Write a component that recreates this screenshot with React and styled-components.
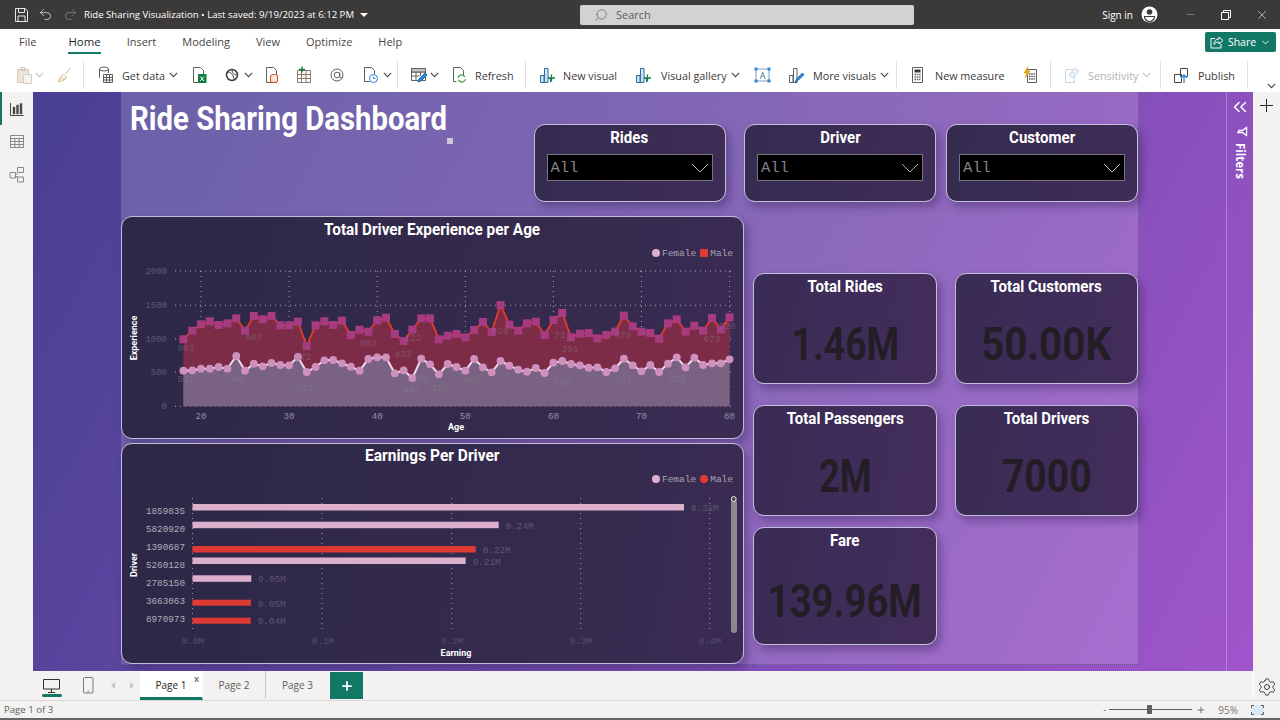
import React from 'react'
import styled, { createGlobalStyle } from 'styled-components'
import { Undo2, Redo2, Search, Minus, X, ChevronDown, Plus, Settings, ChevronsLeft } from 'lucide-react'

const UI = '"Open Sans", "Noto Sans", sans-serif'
const DIN = 'Roboto, sans-serif'
const MONO = '"Liberation Mono", monospace'

const Global = createGlobalStyle`
  html, body { margin: 0; padding: 0; background: #f3f2f1; overflow: hidden; }
  * { box-sizing: border-box; }
`

const Window = styled.div`
  width: 1280px;
  height: 720px;
  display: flex;
  flex-direction: column;
  font-family: ${UI};
  color: #323130;
  overflow: hidden;
`
/* the report font is narrower than Roboto, so squeeze it */
const Din = styled.span`
  display: inline-block;
  white-space: nowrap;
  transform: scaleX(${p => p.$x || 0.94});
`

/* title bar */
const TitleBar = styled.div`
  height: 29px;
  flex: none;
  background: #3b3a39;
  display: flex;
  align-items: center;
  color: #fff;
  font-size: 9.6px;
`
const TitleIcons = styled.div`
  width: 84px;
  padding-left: 15px;
  display: flex;
  align-items: center;
  gap: 10px;
`
const DocTitle = styled.div`
  width: 496px;
  display: flex;
  align-items: center;
  gap: 6px;
  white-space: nowrap;
`
const Caret = styled.span`
  width: 0;
  height: 0;
  border-left: 4px solid transparent;
  border-right: 4px solid transparent;
  border-top: 4px solid #fff;
`
const SearchBox = styled.div`
  width: 334px;
  height: 20px;
  background: #d2d2d2;
  border-radius: 2px;
  padding-left: 14px;
  display: flex;
  align-items: center;
  gap: 8px;
  color: #605e5c;
  font-size: 11px;
`
const SearchIcon = styled(Search)`
  transform: scaleX(-1);
`
const Account = styled.div`
  margin-left: auto;
  display: flex;
  align-items: center;
  color: #fff;
`
const SignIn = styled.span`
  font-size: 10px;
  margin-right: 8px;
`
const WinBtn = styled.div`
  width: 36px;
  margin-left: ${p => p.$ml || 0}px;
  display: flex;
  justify-content: center;
  align-items: center;
`

/* menu tabs */
const MenuBar = styled.div`
  height: 30px;
  flex: none;
  background: #fff;
  display: flex;
  align-items: stretch;
  padding-left: 19px;
  gap: 26px;
  position: relative;
`
const Menu = styled.div`
  display: flex;
  align-items: center;
  font-size: ${p => (p.$active ? 11.4 : 11)}px;
  height: 24px;
  margin-top: 1px;
  margin-left: ${p => p.$ml || 0}px;
  color: ${p => (p.$active ? '#201f1e' : '#484644')};
  border-bottom: 2px solid ${p => (p.$active ? '#117865' : 'transparent')};
`
const ShareBtn = styled.div`
  position: absolute;
  left: 1205px;
  top: 3px;
  width: 71px;
  height: 20px;
  border-radius: 2px;
  background: #117865;
  color: #fff;
  font-size: 10.5px;
  display: flex;
  align-items: center;
  justify-content: center;
  gap: 4px;
`

/* ribbon */
const Ribbon = styled.div`
  height: 33px;
  flex: none;
  background: #fff;
  display: flex;
  align-items: center;
  padding-left: 16px;
  padding-bottom: 1px;
  font-size: 10.8px;
  color: #3b3a39;
`
const Btn = styled.div`
  width: ${p => p.$w}px;
  padding-left: ${p => p.$pl || 0}px;
  display: flex;
  align-items: center;
  flex: none;
  white-space: nowrap;
  color: ${p => (p.$off ? '#b5b3b1' : 'inherit')};
`
const Label = styled.span`
  margin-left: ${p => p.$ml || 8}px;
  margin-right: 4px;
`
const Gap = styled.span`
  width: ${p => p.$w}px;
`
const Sep = styled.div`
  width: 1px;
  height: 28px;
  flex: none;
  background: #e1dfdd;
`
const CollapseBtn = styled.div`
  margin-left: auto;
  margin-top: 21px;
  margin-right: 4px;
  display: flex;
`

/* body */
const Body = styled.div`
  height: 579px;
  flex: none;
  display: flex;
`
const Rail = styled.div`
  width: ${p => p.$w}px;
  flex: none;
  background: #f3f2f1;
  display: flex;
  flex-direction: column;
  align-items: center;
`
const RailBtn = styled.div`
  width: 100%;
  height: 33px;
  display: flex;
  align-items: center;
  justify-content: center;
  border-left: 2px solid ${p => (p.$active ? '#117865' : 'transparent')};
  padding-right: 2px;
`
const AddPane = styled(Plus)`
  margin-top: 3px;
`
const Workspace = styled.div`
  flex: 1;
  display: flex;
  padding-left: 88px;
  background: linear-gradient(118deg, #483f94 0%, #6a4aa8 45%, #a055cb 100%);
`
const Page = styled.div`
  width: 1018px;
  height: 573px;
  position: relative;
  background: linear-gradient(118deg, rgba(255,255,255,.17), rgba(255,255,255,.15));
  border-right: 1px dotted #5a4a80;
  border-bottom: 1px dotted #5a4a80;
`
const Header = styled.div`
  height: 124px;
  display: flex;
  align-items: flex-start;
`
const ReportTitle = styled.div`
  font-family: ${DIN};
  font-weight: 700;
  font-size: 33px;
  line-height: 38px;
  margin: 8px 0 0 9px;
  color: #fff;
  white-space: nowrap;
  transform: scaleX(.888);
  transform-origin: left center;
`
const TitleHandle = styled.span`
  position: absolute;
  left: 326px;
  top: 46px;
  width: 6px;
  height: 6px;
  background: #cbc7dc;
`
const Slicers = styled.div`
  margin: 32px 0 0 auto;
  display: flex;
`
const Panel = styled.div`
  border: 1px solid #c4bcd8;
  border-radius: 11px;
  background: linear-gradient(100deg, ${p => p.$from || '#392c55'}, ${p => p.$to || '#432d5b'});
  box-shadow: 4px 5px 9px rgba(45, 25, 80, .38);
`
const Slicer = styled(Panel)`
  width: 192px;
  height: 78px;
  margin-left: ${p => p.$ml || 0}px;
  padding: 0 12px;
  display: flex;
  flex-direction: column;
`
const PanelTitle = styled.div`
  font-family: ${DIN};
  font-weight: 700;
  font-size: 16px;
  line-height: ${p => p.$h || 26}px;
  height: ${p => p.$h || 26}px;
  text-align: center;
  color: #fff;
  flex: none;
`
const Dropdown = styled.div`
  height: 27px;
  margin-top: 3px;
  background: #000;
  border: 1px solid #77747f;
  display: flex;
  align-items: center;
  justify-content: space-between;
  padding: 0 3px;
  font-family: ${MONO};
  font-size: 15.5px;
  color: #85828c;
`
const Main = styled.div`
  display: flex;
  gap: 9px;
`
const Charts = styled.div`
  width: 623px;
  display: flex;
  flex-direction: column;
  gap: 4px;
`
const ChartCard = styled(Panel)`
  height: ${p => p.$h}px;
  display: flex;
  flex-direction: column;
`
const Legend = styled.div`
  height: 14px;
  margin-top: 4px;
  padding-right: 10px;
  display: flex;
  justify-content: flex-end;
  align-items: center;
  font-family: ${MONO};
  font-size: 9.5px;
  color: #a7a3b4;
`
const Swatch = styled.span`
  width: 8px;
  height: 8px;
  margin: 0 2px 0 4px;
  background: ${p => p.$color};
  border-radius: ${p => (p.$round ? '50%' : '0')};
`
const ChartSvg = styled.svg`
  display: block;
  flex: none;
`
const Kpis = styled.div`
  padding-top: 57px;
  display: grid;
  grid-template-columns: 184px 183px;
  grid-template-rows: 111px 111px 108px;
  column-gap: 18px;
  row-gap: 21px;
`
const Kpi = styled(Panel)`
  display: flex;
  flex-direction: column;
  margin-top: ${p => p.$mt || 0}px;
  text-align: center;
`
const KpiValue = styled.div`
  flex: 1;
  display: flex;
  align-items: center;
  justify-content: center;
  font-family: ${DIN};
  font-weight: 700;
  font-size: 46px;
  color: #231e26;
  padding-top: 4px;
`
const FilterPane = styled.div`
  margin-left: auto;
  width: 27px;
  border-left: 1px solid rgba(255,255,255,.28);
  display: flex;
  flex-direction: column;
  align-items: center;
  padding-top: 4px;
  color: #fff;
`
const FunnelWrap = styled.div`
  margin: 8px 0 0 4px;
  display: flex;
  transform: rotate(90deg);
`
const FiltersText = styled.div`
  writing-mode: vertical-rl;
  font-size: 11.5px;
  font-weight: 700;
  margin-top: 6px;
`

/* page tabs */
const PageBar = styled.div`
  height: 29px;
  flex: none;
  background: #f3f2f1;
  display: flex;
  position: relative;
`
const ViewBtn = styled.div`
  width: ${p => p.$w}px;
  padding-left: ${p => p.$pl || 0}px;
  display: flex;
  align-items: center;
  flex: none;
`
const DesktopView = styled(ViewBtn)`
  position: relative;
  &::after {
    content: '';
    position: absolute;
    left: 42px;
    top: 23px;
    width: 20px;
    height: 3px;
    border-radius: 2px;
    background: #117865;
  }
`
const PageNav = styled.svg`
  margin-left: 17px;
`
const PageTab = styled.div`
  width: ${p => p.$w || 63}px;
  height: 29px;
  flex: none;
  display: flex;
  align-items: center;
  justify-content: center;
  padding-top: 2px;
  position: relative;
  font-size: 10px;
  background: ${p => (p.$active ? '#fff' : 'transparent')};
  color: ${p => (p.$active ? '#252423' : '#605e5c')};
  border-right: 1px solid ${p => (p.$active ? '#fff' : p.$last ? 'transparent' : '#c8c6c4')};
  border-bottom: 3px solid ${p => (p.$active ? '#117865' : 'transparent')};
`
const TabClose = styled.span`
  position: absolute;
  right: 3px;
  top: 1px;
  font-size: 9.5px;
  color: #323130;
`
const AddTab = styled.div`
  width: 33px;
  height: 27px;
  margin-top: 1px;
  background: #117865;
  display: flex;
  align-items: center;
  justify-content: center;
`
const SettingsBtn = styled.div`
  margin-left: auto;
  width: 27px;
  display: flex;
  align-items: center;
  justify-content: center;
  padding-top: 2px;
  border-left: 1px solid #fff;
`

/* status bar */
const StatusBar = styled.div`
  height: 20px;
  flex: none;
  background: #f3f2f1;
  border-top: 1px solid #dcdad8;
  border-bottom: 2px solid #666;
  padding-left: 4px;
  display: flex;
  align-items: center;
  font-size: 9.6px;
  color: #605e5c;
`
const Zoom = styled.div`
  margin-left: auto;
  display: flex;
  align-items: center;
  color: #605e5c;
`
const ZoomTrack = styled.div`
  width: 83px;
  height: 1px;
  margin: 0 4px 0 3px;
  background: #605e5c;
  position: relative;
`
const ZoomThumb = styled.span`
  position: absolute;
  left: 38px;
  top: -4px;
  width: 5px;
  height: 9px;
  border-radius: 1px;
  background: #605e5c;
`
const ZoomPct = styled.span`
  margin-left: 12px;
  font-size: 10px;
  color: #797775;
`
const FitBtn = styled.div`
  margin: 0 16px 0 13px;
  width: 13px;
  height: 10px;
  display: flex;
  background: #dbe9f4;
`

/* icons */
const Ic = ({ w = 16, h = 18, stroke = '#605e5c', children }) => (
  <svg width={w} height={h} viewBox={`0 0 ${w} ${h}`} fill="none" stroke={stroke} strokeWidth="1">{children}</svg>
)
const Chev = ({ off }) => (
  <svg width="9" height="6" viewBox="0 0 9 6" fill="none" stroke={off ? '#c8c6c4' : '#484644'} strokeWidth="1.1">
    <path d="M.8.8 4.5 4.6 8.2.8" />
  </svg>
)
const IcoSave = () => <Ic w={13} h={14} stroke="#e8e6e4"><path d="M.5.5h9.7l2.3 2.3v10.7H.5z" /><path d="M3.5.5v4h6v-4M3 13.5V8h7v5.500" /></Ic>
const IcoPaste = () => <Ic><path d="M1.500 3.500h11v13h-11z" fill="#eee4d2" stroke="#d4c8b4" /><path d="M5 1.500h4v3h-4z" stroke="#cdc3b2" /><path d="M7.500 8.500h8v9h-8z" fill="#f4f3f2" stroke="#d2d0ce" /></Ic>
const IcoBrush = () => <Ic w={15}><path d="M13.500 2 8.500 8M1.500 15.500c.5-3 2.500-6 5-7l3 3c-1 2-4 4-8 4zM3.500 14l2-3M6 14l1.500-2" stroke="#d8b67a" /><path d="M6.500 8.500l3 3" stroke="#b9b7b5" /></Ic>
const IcoData = () => <Ic><ellipse cx="6" cy="3" rx="4.500" ry="2" /><path d="M1.500 3v9M10.500 3v4" /><path d="M5.500 8.500h9v8h-9zM5.500 11.500h9M5.500 14h9M8.500 8.500v8M11.500 8.500v8" fill="#f8f8f8" /></Ic>
const IcoExcel = () => <Ic w={15}><path d="M1.500 1.500h7l3 3v12h-10z" /><rect x="6" y="8" width="8.500" height="9" fill="#107c41" stroke="none" /><path d="m8.300 10.500 3.600 4.500m0-4.500L8.300 15" stroke="#fff" /></Ic>
const IcoDataverse = () => <Ic><circle cx="8" cy="9" r="5.500" stroke="#3b3a39" strokeWidth="1.500" /><path d="M3 6c4 0 6 2 7 7M8 4c0 3 2 5 6 5" stroke="#3b3a39" /></Ic>
const IcoSql = () => <Ic><path d="M2.500 1.500h7l3 3v12h-10z" /><ellipse cx="10" cy="10" rx="3.500" ry="1.500" stroke="#ca5010" fill="#fff" /><path d="M6.500 10v5.500c1 1.300 6 1.300 7 0V10" stroke="#ca5010" fill="#fbe6d6" /></Ic>
const IcoTable = () => <Ic><path d="M1.500 4.500h13v12h-13zM1.500 8.500h13M1.500 12.500h13M5.500 4.500v12M10 4.500v12" stroke="#8a7868" /><path d="M6 .5v6M3 3.500h6" stroke="#107c41" strokeWidth="1.300" /></Ic>
const IcoAt = () => <Ic><circle cx="8" cy="9" r="6" /><circle cx="8" cy="9" r="2.800" /><path d="M10.800 6.500v4c0 2 2.500 1.500 3-.5" /></Ic>
const IcoClock = () => <Ic><path d="M1.500 1.500h7l3 3v4M1.500 1.500v14h5" /><circle cx="10.500" cy="12.500" r="4" stroke="#2b7cd3" fill="#fff" /><path d="M10.500 10.500v2h2" stroke="#2b7cd3" /></Ic>
const IcoEdit = () => <Ic w={17}><path d="M1.500 2.500h14v12h-14zM1.500 6h14M1.500 10h8M6 6v8.500M10.500 6v4" /><path d="M1.500 2.500h14V6h-14z" fill="#c8c6c4" /><path d="m8 16 1-3 6-6 2 2-6 6z" fill="#2b88d8" stroke="#1a6fb5" /></Ic>
const IcoRefresh = () => <Ic><path d="M2.500 1.500h7l3 3v5M2.500 1.500v14h3" /><path d="M7 12a3.500 3.500 0 0 1 6-2l1.200 1M14.500 13a3.500 3.500 0 0 1-6 2L7.300 14" stroke="#3aa655" strokeWidth="1.200" /></Ic>
const IcoVisual = () => <Ic><path d="M1.500 9.500h3.500v7H1.500zM5.500 2.500H9v14H5.500z" stroke="#2b6ea3" fill="#cfe3f3" /><path d="M9 12.500h2.500v4" stroke="#2b6ea3" /><path d="M12.500 8.500v7M9 12h7" stroke="#107c41" strokeWidth="1.300" /></Ic>
const IcoA = () => (
  <Ic w={17} h={16} stroke="#2b6ea3">
    <path d="M2 2h13v12H2z" stroke="#7a9cbc" />
    <path d="M.5.5h3v3h-3zM13.500.5h3v3h-3zM.5 12.500h3v3h-3zM13.500 12.500h3v3h-3z" fill="#2b88d8" stroke="none" />
    <text x="8.500" y="11.500" fontSize="9" textAnchor="middle" fill="#2b6ea3" stroke="none" fontFamily={UI}>A</text>
  </Ic>
)
const IcoMore = () => <Ic><path d="M1.500 9.500h3.500v7H1.500zM5.500 2.500H9v14H5.500z" /><path d="m7 17 1.500-4 6-6 1.500 1.500-6 6z" fill="#2b88d8" stroke="#1a6fb5" /></Ic>
const IcoCalc = () => <Ic w={13}><path d="M1.500 1.500h10v15h-10z" /><path d="M3.500 3.500h6v3h-6z" fill="#3b3a39" stroke="none" /><path d="M3.500 8.500h6M3.500 11h6M3.500 13.500h6" strokeWidth="1.300" strokeDasharray="1.500 .8" /></Ic>
const IcoQuick = () => <Ic><path d="M5.500 3.500h9v13h-9z" /><path d="M7 8h6M7 10.500h6M7 13h6" strokeWidth="1.300" strokeDasharray="1.500 .8" /><path d="M6 .5 2 7h3l-2 5 5-7H5z" fill="#f2a900" stroke="#d48c00" strokeWidth=".5" /></Ic>
const IcoSens = () => <Ic stroke="#c5d9ea"><path d="M1.500 3.500h9v13h-9z" /><path d="m5 9 6-7 4 3-6 7z" fill="#eef4f9" /><path d="M8 6l3 2" /></Ic>
const IcoPublish = () => <Ic><path d="M1.500 8.500h7v8h-7zM7.500 2.500h7v8h-7z" stroke="#484644" /><path d="M11 17v-8M8 12l3-3 3 3" stroke="#2b88d8" strokeWidth="1.300" /></Ic>
const IcoReport = () => <Ic w={14} h={14} stroke="#484644"><path d="M.5 1v12.500h13" /><path d="M3 5h2v7H3zM6.500 3h2v9h-2zM10 1.500h2V12h-2z" fill="#484644" strokeWidth=".4" /></Ic>
const IcoGrid = () => <Ic w={14} h={13} stroke="#8a8886"><path d="M.5.5h13v12H.5zM.5 3.500h13M.5 6.500h13M.5 9.500h13M4.800 3.500v9M9.200 3.500v9" /></Ic>
const IcoModel = () => <Ic w={16} h={16} stroke="#8a8886"><path d="M8.500.5h6v5h-6zM8.500 10h6v5h-6zM1 5.500h5.500v5.500H1zM6.500 7h2M6.500 9.500h2" /></Ic>
const IcoAvatar = () => <svg width="17" height="17" viewBox="0 0 17 17"><circle cx="8.500" cy="8.500" r="8" fill="#fff" /><circle cx="8.500" cy="6" r="2.800" fill="#3b3a39" /><path d="M3.500 10.500h10a5 5 0 0 1-10 0z" fill="none" stroke="#3b3a39" strokeWidth="1.200" /></svg>
const IcoRestore = () => <Ic w={10} h={10} stroke="#fff"><path d="M.5 2.500h7v7h-7zM2.500 2.500v-2h7v7h-2" /></Ic>
const IcoShare = () => <Ic w={14} h={13} stroke="#fff"><path d="M5 2.500H1v9.500h10V8" /><path d="M13 4.500 9 1v2C6 3 4 5 4 8.500 5.500 6.500 7 6 9 6v2z" /></Ic>
const IcoFunnel = () => <Ic w={10} h={11} stroke="#fff"><path d="M.8.8h8.400L6 5v4.500L4 8.500V5z" strokeWidth="1.400" /></Ic>
const IcoMonitor = () => <Ic w={18} h={14} stroke="#323130"><path d="M.5.5h16v9.500H.5zM8.500 10v3M5 13.500h7" /></Ic>
const IcoPhone = () => <Ic w={11} h={17} stroke="#797775"><rect x=".5" y=".5" width="9.500" height="15.500" rx="1" /><path d="M4.500 14h1.500" /></Ic>
const IcoFit = () => <Ic w={13} h={10} stroke="#605e5c"><path d="M.5 3V.5H3M10 .5h2.500V3M12.500 7v2.500H10M3 9.500H.5V7" /></Ic>

/* chart data, read off the picture as y px (chart one) per age 18..80 */
const maleY = [373,347,328,319,330,325,310,347,303,313,303,331,331,320,393,331,319,330,317,360,344,350,316,308,357,378,344,310,310,373,362,357,367,345,321,351,270,329,347,325,320,360,315,294,367,356,354,370,360,350,302,334,350,354,371,325,313,350,332,347,309,343,307]
const femaleY = [467,466,461,461,456,461,423,467,446,454,444,450,451,426,471,456,436,435,445,455,467,432,427,427,475,466,489,431,448,478,447,456,467,432,457,472,438,452,464,470,459,474,443,438,447,451,458,457,471,460,431,451,469,450,471,446,427,457,428,450,445,445,433]
const ageX = age => 201 + (age - 20) * 8.81
const pts = arr => arr.map((z, i) => [ageX(18 + i), 215 + z / 3])
const line = p => p.map(([x, y]) => `${x.toFixed(1)},${y.toFixed(1)}`).join(' ')
const area = p => `${p[0][0]},406.3 ${line(p)} ${p[p.length - 1][0]},406.3`

const malePts = pts(maleY)
const femalePts = pts(femaleY)

const dataLabels = [
  ['962', 186, 351], ['517', 186, 382], ['907', 254, 340], ['46', 238, 382], ['903', 368, 346], ['372', 303, 360],
  ['101', 305, 391], ['433', 403, 357], ['122', 413, 341], ['427', 420, 382], ['401', 412, 393], ['125', 440, 391],
  ['828', 500, 334], ['605', 473, 383], ['391', 570, 352], ['71', 560, 338], ['563', 562, 385], ['670', 623, 338],
  ['701', 623, 383], ['723', 677, 382], ['679', 712, 342], ['720', 727, 329],
]

const ExperienceChart = () => (
  <ChartSvg width="621" height="178" viewBox="122 260 621 178">
    <g stroke="#d0cce0" strokeWidth="1" strokeDasharray="1 4" opacity=".75">
      {[271, 305.3, 339, 372.3, 406.3].map(y => <path key={y} d={`M175 ${y}H731`} />)}
      {[20, 30, 40, 50, 60, 70, 80].map(a => <path key={a} d={`M${ageX(a)} 271V406`} />)}
    </g>
    <polygon points={area(malePts)} fill="#7c2c46" />
    <polygon points={area(femalePts)} fill="#7a6382" />
    <polyline points={line(malePts)} fill="none" stroke="#dd3a2e" strokeWidth="2" />
    <polyline points={line(femalePts)} fill="none" stroke="#f0dcea" strokeWidth="2" />
    {malePts.map(([x, y]) => <rect key={x} x={x - 4} y={y - 4} width="8" height="8" fill="#a63b80" />)}
    {femalePts.map(([x, y]) => <circle key={x} cx={x} cy={y} r="3.900" fill="#cf90bd" />)}
    <g fontFamily={MONO} fontSize="9.500" fill="#8b7f92" opacity=".45" textAnchor="middle">
      {dataLabels.map(([t, x, y]) => <text key={t + x} x={x} y={y}>{t}</text>)}
    </g>
    <g fontFamily={MONO} fontSize="9" fill="#5f5a72" textAnchor="end">
      {[[2000, 271], [1500, 305.3], [1000, 339], [500, 372.3], [0, 406.3]].map(([t, y]) => <text key={t} x="167" y={y + 3}>{t}</text>)}
    </g>
    <g fontFamily={MONO} fontSize="9.200" fill="#938fa3" textAnchor="middle">
      {[20, 30, 40, 50, 60, 70, 80].map(a => <text key={a} x={ageX(a)} y="419">{a}</text>)}
    </g>
    <text x="456" y="430" fontFamily={DIN} fontWeight="700" fontSize="9" fill="#fff" textAnchor="middle">Age</text>
    <text transform="translate(137 338) rotate(-90)" fontFamily={DIN} fontWeight="700" fontSize="9" fill="#fff" textAnchor="middle">Experience</text>
  </ChartSvg>
)

const earnings = [
  { id: '1859835', top: 504, h: 6.5, end: 684, color: '#dcb0cc', label: '0.32M', lx: 691, ly: 511, ty: 514 },
  { id: '5820920', top: 521.7, h: 6.5, end: 498.7, color: '#dcb0cc', label: '0.24M', lx: 505.7, ly: 529, ty: 532 },
  { id: '1390687', top: 546, h: 6.5, end: 475.7, color: '#dd3a33', label: '0.22M', lx: 482.7, ly: 553, ty: 550 },
  { id: '5260128', top: 557.5, h: 6.5, end: 465.7, color: '#dcb0cc', label: '0.21M', lx: 472.7, ly: 565, ty: 568 },
  { id: '2785150', top: 575.3, h: 6.5, end: 251.3, color: '#dcb0cc', label: '0.05M', lx: 258, ly: 582, ty: 586 },
  { id: '3663063', top: 599.7, h: 6, end: 251, color: '#dd3a33', label: '0.05M', lx: 257.7, ly: 607, ty: 604 },
  { id: '8970973', top: 617.7, h: 6, end: 250.7, color: '#dd3a33', label: '0.04M', lx: 257.7, ly: 624, ty: 622 },
]

const EarningsChart = () => (
  <ChartSvg width="621" height="177" viewBox="122 486 621 177">
    <g stroke="#c8c4d8" strokeWidth="1" strokeDasharray="1 4" opacity=".7">
      {[192.5, 322, 451.7, 580.7, 709.7].map(x => <path key={x} d={`M${x} 498V632`} />)}
    </g>
    {earnings.map(b => (
      <g key={b.id}>
        <rect x="192.500" y={b.top} width={b.end - 192.5} height={b.h} fill={b.color} />
        <text x={b.lx} y={b.ly} fontFamily={MONO} fontSize="9.300" fill="#5d566f">{b.label}</text>
        <text x="185" y={b.ty} fontFamily={MONO} fontSize="9.300" fill="#b0adb9" textAnchor="end">{b.id}</text>
      </g>
    ))}
    <g fontFamily={MONO} fontSize="9.300" fill="#544e68" textAnchor="middle">
      {[[193, '0.0M'], [323, '0.1M'], [452, '0.2M'], [581, '0.3M'], [710, '0.4M']].map(([x, t]) => <text key={t} x={x} y="644">{t}</text>)}
    </g>
    <rect x="731" y="500" width="6" height="133" rx="3" fill="#8b8794" />
    <circle cx="733.700" cy="499" r="2.500" fill="#4a4458" stroke="#eee" />
    <text x="456" y="656" fontFamily={DIN} fontWeight="700" fontSize="9" fill="#fff" textAnchor="middle">Earning</text>
    <text transform="translate(137 565) rotate(-90)" fontFamily={DIN} fontWeight="700" fontSize="9" fill="#fff" textAnchor="middle">Driver</text>
  </ChartSvg>
)

const Slice = ({ title, ml }) => (
  <Slicer $ml={ml} $from="#352b4f" $to="#3e2d56">
    <PanelTitle><Din>{title}</Din></PanelTitle>
    <Dropdown>
      All
      <svg width="18" height="10" viewBox="0 0 18 10" fill="none" stroke="#b5b3bb"><path d="M1 1l8 8 8-8" /></svg>
    </Dropdown>
  </Slicer>
)

const KpiCard = ({ title, value, x, mt }) => (
  <Kpi $mt={mt}>
    <PanelTitle><Din>{title}</Din></PanelTitle>
    <KpiValue><Din $x={x}>{value}</Din></KpiValue>
  </Kpi>
)

export default function App() {
  return (
    <Window>
      <Global />
      <TitleBar>
        <TitleIcons>
          <IcoSave />
          <Undo2 size={15} color="#e8e6e4" strokeWidth={1.2} />
          <Redo2 size={15} color="#8a8886" strokeWidth={1.2} />
        </TitleIcons>
        <DocTitle>
          Ride Sharing Visualization • Last saved: 9/19/2023 at 6:12 PM
          <Caret />
        </DocTitle>
        <SearchBox>
          <SearchIcon size={14} strokeWidth={1.2} />
          Search
        </SearchBox>
        <Account>
          <SignIn>Sign in</SignIn>
          <IcoAvatar />
          <WinBtn $ml={14}><Minus size={11} strokeWidth={1} color="#c8c6c4" /></WinBtn>
          <WinBtn><IcoRestore /></WinBtn>
          <WinBtn><X size={14} strokeWidth={1} /></WinBtn>
        </Account>
      </TitleBar>

      <MenuBar>
        <Menu>File</Menu>
        <Menu $active $ml={6}>Home</Menu>
        <Menu>Insert</Menu>
        <Menu>Modeling</Menu>
        <Menu>View</Menu>
        <Menu>Optimize</Menu>
        <Menu>Help</Menu>
        <ShareBtn><IcoShare />Share<ChevronDown size={11} /></ShareBtn>
      </MenuBar>

      <Ribbon>
        <Btn $w={34} $off><IcoPaste /><Gap $w={3} /><Chev off /></Btn>
        <Btn $w={33} $pl={7}><IcoBrush /></Btn>
        <Sep />
        <Btn $w={96} $pl={14}><IcoData /><Label>Get data</Label><Chev /></Btn>
        <Btn $w={30} $pl={12}><IcoExcel /></Btn>
        <Btn $w={44} $pl={14}><IcoDataverse /><Gap $w={4} /><Chev /></Btn>
        <Btn $w={30} $pl={10}><IcoSql /></Btn>
        <Btn $w={30} $pl={12}><IcoTable /></Btn>
        <Btn $w={34} $pl={15}><IcoAt /></Btn>
        <Btn $w={49} $pl={15}><IcoClock /><Gap $w={4} /><Chev /></Btn>
        <Sep />
        <Btn $w={42} $pl={12}><IcoEdit /><Gap $w={3} /><Chev /></Btn>
        <Btn $w={85} $pl={11}><IcoRefresh /><Label>Refresh</Label></Btn>
        <Sep />
        <Btn $w={95} $pl={13}><IcoVisual /><Label>New visual</Label></Btn>
        <Btn $w={124} $pl={14}><IcoVisual /><Label $ml={10}>Visual gallery</Label><Chev /></Btn>
        <Btn $w={33} $pl={9}><IcoA /></Btn>
        <Btn $w={118} $pl={10}><IcoMore /><Label $ml={9}>More visuals</Label><Chev /></Btn>
        <Sep />
        <Btn $w={114} $pl={14}><IcoCalc /><Label $ml={11}>New measure</Label></Btn>
        <Btn $w={39} $pl={11}><IcoQuick /></Btn>
        <Sep />
        <Btn $w={109} $pl={13} $off><IcoSens /><Label>Sensitivity</Label><Chev off /></Btn>
        <Sep />
        <Btn $w={86} $pl={12}><IcoPublish /><Label $ml={9}>Publish</Label></Btn>
        <Sep />
        <CollapseBtn><Chev /></CollapseBtn>
      </Ribbon>

      <Body>
        <Rail $w={33}>
          <RailBtn $active><IcoReport /></RailBtn>
          <RailBtn><IcoGrid /></RailBtn>
          <RailBtn><IcoModel /></RailBtn>
        </Rail>
        <Workspace>
          <Page>
            <Header>
              <ReportTitle>Ride Sharing Dashboard</ReportTitle>
              <TitleHandle />
              <Slicers>
                <Slice title="Rides" />
                <Slice title="Driver" ml={18.5} />
                <Slice title="Customer" ml={10} />
              </Slicers>
            </Header>
            <Main>
              <Charts>
                <ChartCard $h={223} $from="#2c2846" $to="#3a2b52">
                  <PanelTitle $h={25}><Din $x={.955}>Total Driver Experience per Age</Din></PanelTitle>
                  <Legend>
                    <Swatch $round $color="#dcb0cc" />Female
                    <Swatch $color="#e03a35" />Male
                  </Legend>
                  <ExperienceChart />
                </ChartCard>
                <ChartCard $h={221} $from="#2c2846" $to="#3a2b52">
                  <PanelTitle $h={24}><Din $x={.97}>Earnings Per Driver</Din></PanelTitle>
                  <Legend>
                    <Swatch $round $color="#dcb0cc" />Female
                    <Swatch $round $color="#e03a35" />Male
                  </Legend>
                  <EarningsChart />
                </ChartCard>
              </Charts>
              <Kpis>
                <KpiCard title="Total Rides" value="1.46M" x={.81} />
                <KpiCard title="Total Customers" value="50.00K" x={.877} />
                <KpiCard title="Total Passengers" value="2M" x={.79} />
                <KpiCard title="Total Drivers" value="7000" x={.85} />
                <KpiCard title="Fare" value="139.96M" x={.83} mt={-10} />
              </Kpis>
            </Main>
          </Page>
          <FilterPane>
            <ChevronsLeft size={22} strokeWidth={1.6} />
            <FunnelWrap><IcoFunnel /></FunnelWrap>
            <FiltersText>Filters</FiltersText>
          </FilterPane>
        </Workspace>
        <Rail $w={27}>
          <AddPane size={21} strokeWidth={1.1} color="#201f1e" />
        </Rail>
      </Body>

      <PageBar>
        <DesktopView $w={83} $pl={43}><IcoMonitor /></DesktopView>
        <ViewBtn $w={57}>
          <IcoPhone />
          <PageNav width="28" height="9" viewBox="0 0 28 9" fill="#c8c6c4"><path d="M4 1v7L0 4.500zM19 1v7l4-3.500z" /></PageNav>
        </ViewBtn>
        <PageTab $active>Page 1<TabClose>x</TabClose></PageTab>
        <PageTab>Page 2</PageTab>
        <PageTab $w={64} $last>Page 3</PageTab>
        <AddTab><Plus size={14} strokeWidth={3} color="#fff" /></AddTab>
        <SettingsBtn><Settings size={20} strokeWidth={1.1} color="#323130" /></SettingsBtn>
      </PageBar>

      <StatusBar>
        Page 1 of 3
        <Zoom>
          <span>-</span>
          <ZoomTrack><ZoomThumb /></ZoomTrack>
          <Plus size={10} />
          <ZoomPct>95%</ZoomPct>
          <FitBtn><IcoFit /></FitBtn>
        </Zoom>
      </StatusBar>
    </Window>
  )
}
